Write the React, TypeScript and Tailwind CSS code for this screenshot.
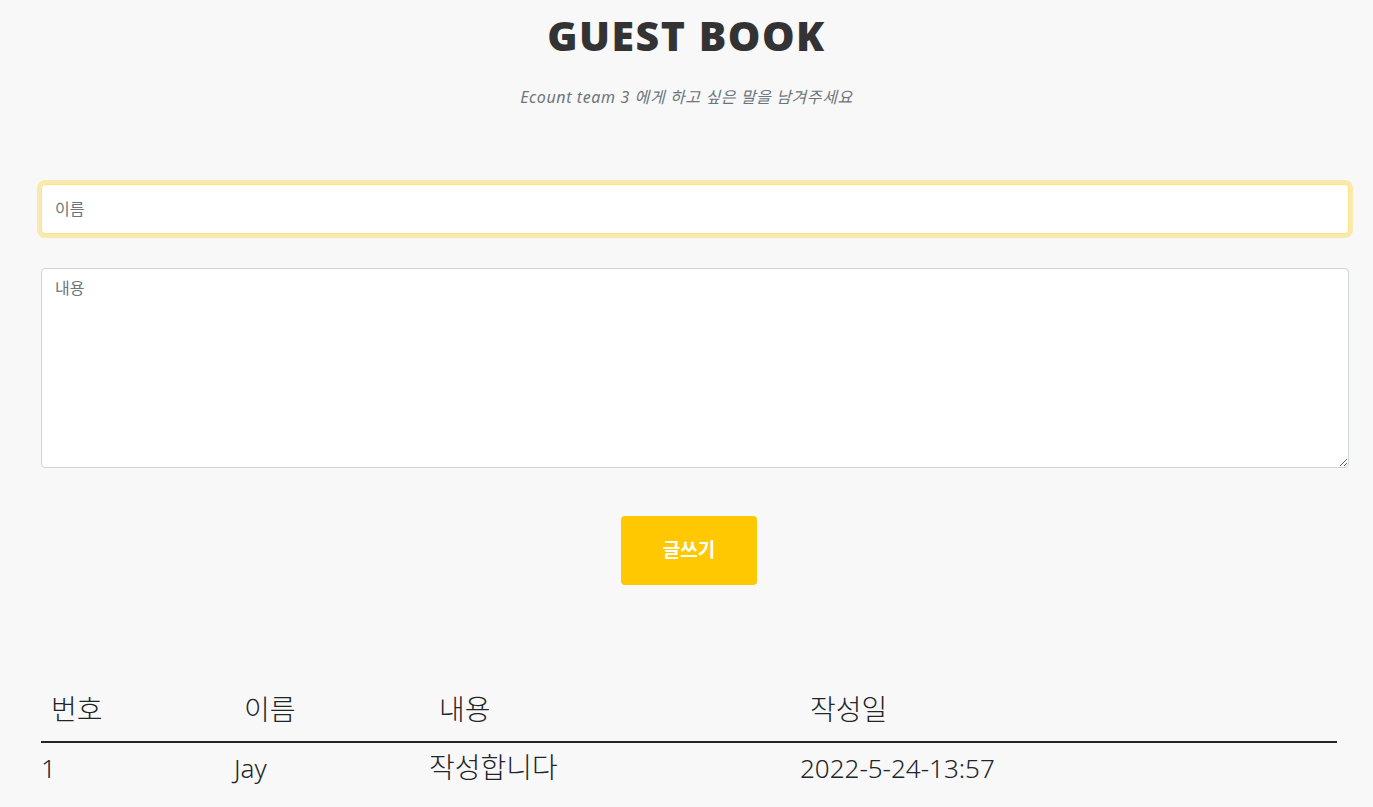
import type { FC } from "react";

const rows = [{ id: 1, name: "Jay", content: "작성합니다", date: "2022-5-24-13:57" }];

const font = "font-['Noto_Sans','Noto_Sans_CJK_KR',sans-serif]";

export const GuestForm: FC = () => (
  <div className="flex flex-col">
    <input
      autoFocus
      placeholder="이름"
      className={`h-[50px] w-full rounded-[4px] border border-[#ffe484] bg-white px-[13px] text-[16px] text-[#212529] placeholder:text-[#6c757d] outline-none ring-4 ring-[#ffc800]/30 ${font}`}
    />
    <textarea
      placeholder="내용"
      className={`mt-[34px] h-[200px] w-full rounded-[4px] border border-[#ced4da] bg-white px-[13px] py-[7px] text-[16px] text-[#212529] placeholder:text-[#6c757d] outline-none ${font}`}
    />
    <div className="mt-[48px] flex justify-center pr-[12px]">
      <button className={`h-[69px] w-[136px] rounded-[4px] bg-[#ffc800] text-[19px] font-bold text-white ${font}`}>
        글쓰기
      </button>
    </div>
  </div>
);

export default function App() {
  return (
    <div className={`min-h-[807px] bg-[#f8f8f8] pb-10 ${font}`}>
      <h1 className="pt-[9px] text-center font-['Open_Sans',sans-serif] text-[41px] font-extrabold leading-[52px] tracking-[1.5px] text-[#333333]">
        GUEST BOOK
      </h1>
      <p className="mt-[26px] text-center text-[16px] italic leading-5 tracking-[0.6px] text-[#6c757d]">
        Ecount team 3 에게 하고 싶은 말을 남겨주세요
      </p>
      <div className="ml-[41px] mt-[77px] w-[1308px]">
        <GuestForm />
      </div>
      <div className="ml-[41px] mt-[100px] w-[1296px] text-[26px] font-light text-[#212529]">
        <div className="grid grid-cols-[193px_195px_371px_1fr] border-b-2 border-[#212529] pb-[11px] pl-[10px] pt-[3px] text-[28px]">
          <span>번호</span>
          <span>이름</span>
          <span>내용</span>
          <span>작성일</span>
        </div>
        {rows.map((r) => (
          <div key={r.id} className="grid grid-cols-[193px_195px_371px_1fr] pt-[6px]">
            <span>{r.id}</span>
            <span>{r.name}</span>
            <span className="-mt-[3px] text-[28px]">{r.content}</span>
            <span>{r.date}</span>
          </div>
        ))}
      </div>
    </div>
  );
}
